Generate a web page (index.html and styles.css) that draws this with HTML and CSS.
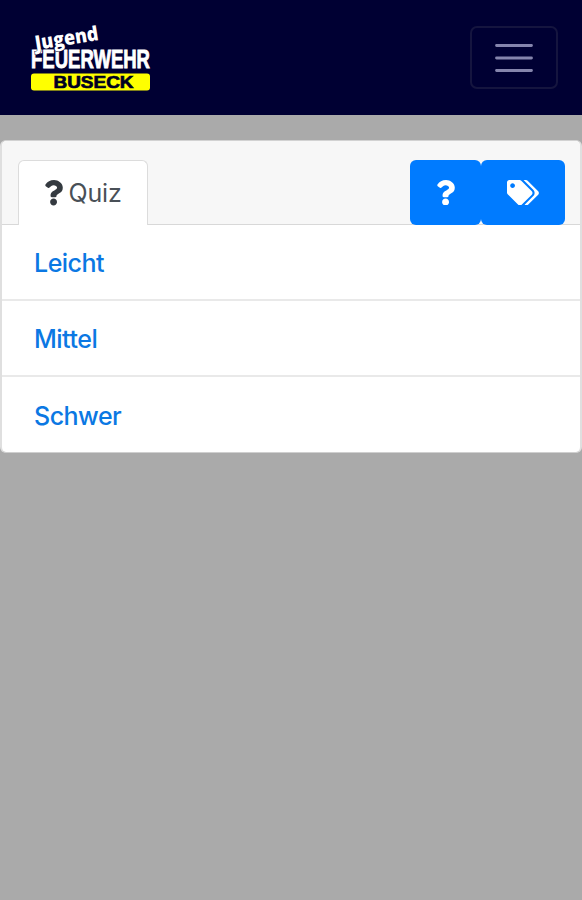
FILE: index.html
```
<!DOCTYPE html>
<html lang="de">
<head>
    <meta charset="UTF-8">
    <meta name="viewport" content="width=device-width, initial-scale=1.0">
    <title>Jugendfeuerwehr Buseck - Quiz</title>
    <link rel="stylesheet" href="styles.css">
</head>
<body>
    <nav class="navbar">
        <a class="navbar-brand" href="#">
            <svg class="logo" viewBox="0 0 124 70" role="img" aria-label="Jugend Feuerwehr Buseck">
                <text class="logo-feuerwehr" x="2" y="44.5" textLength="119" lengthAdjust="spacingAndGlyphs">FEUERWEHR</text>
                <text class="logo-jugend" x="7" y="27" textLength="64" lengthAdjust="spacingAndGlyphs" transform="rotate(-9 7 27)">Jugend</text>
                <rect x="2" y="50.5" width="119" height="17" rx="3"/>
                <text class="logo-buseck" x="24.5" y="65" textLength="80" lengthAdjust="spacingAndGlyphs">BUSECK</text>
            </svg>
        </a>
        <button class="navbar-toggler" type="button" aria-label="Menü">
            <svg viewBox="0 0 38 30">
                <path d="M1.5 2.5h35M1.5 15h35M1.5 27.5h35"/>
            </svg>
        </button>
    </nav>

    <div class="card">
        <div class="card-header">
            <a class="nav-link active" href="#">
                <svg class="icon" viewBox="0 0 384 512"><use href="#question"/></svg>
                <span>Quiz</span>
            </a>
            <div class="buttons">
                <button class="btn btn-question" type="button" aria-label="Fragen">
                    <svg class="icon" viewBox="0 0 384 512">
                        <path id="question" d="M202.021 0C122.202 0 70.503 32.703 29.914 91.026c-7.363 10.58-5.093 25.086 5.178 32.874l43.138 32.709c10.373 7.865 25.132 6.026 33.253-4.148 25.049-31.381 43.63-49.449 82.757-49.449 30.764 0 68.816 19.799 68.816 49.631 0 22.552-18.617 34.134-48.993 51.164-35.423 19.86-82.299 44.576-82.299 106.405V320c0 13.255 10.745 24 24 24h72.471c13.255 0 24-10.745 24-24v-5.773c0-42.86 125.268-44.645 125.268-160.627C377.504 66.256 286.902 0 202.021 0zM192 373.459c-38.196 0-69.271 31.075-69.271 69.271 0 38.195 31.075 69.27 69.271 69.27s69.271-31.075 69.271-69.271-31.075-69.27-69.271-69.27z"/>
                    </svg>
                </button>
                <button class="btn btn-tags" type="button" aria-label="Kategorien">
                    <svg class="icon" viewBox="0 0 640 512">
                        <path d="M497.941 225.941L286.059 14.059A48 48 0 0 0 252.118 0H48C21.49 0 0 21.49 0 48v204.118a48 48 0 0 0 14.059 33.941l211.882 211.882c18.744 18.745 49.136 18.746 67.882 0l204.118-204.118c18.745-18.745 18.745-49.137 0-67.882zM112 160c-26.51 0-48-21.49-48-48s21.49-48 48-48 48 21.49 48 48-21.49 48-48 48zm513.941 133.823L421.823 497.941c-18.745 18.745-49.137 18.745-67.882 0l-.36-.36L527.64 323.522c16.999-16.999 26.36-39.6 26.36-63.64s-9.362-46.641-26.36-63.64L331.397 0h48.721a48 48 0 0 1 33.941 14.059l211.882 211.882c18.745 18.745 18.745 49.137 0 67.882z"/>
                    </svg>
                </button>
            </div>
        </div>
        <ul class="list-group">
            <li><a href="#">Leicht</a></li>
            <li><a href="#">Mittel</a></li>
            <li><a href="#">Schwer</a></li>
        </ul>
    </div>
</body>
</html>
```
FILE: styles.css
```
* {
    box-sizing: border-box;
}

body {
    margin: 0;
    min-height: 100vh;
    background-color: #aaaaaa;
    font-family: Inter, "Liberation Sans", sans-serif;
    font-size: 25px;
}

a {
    text-decoration: none;
}

button {
    font: inherit;
    cursor: pointer;
}

.navbar {
    display: flex;
    align-items: center;
    justify-content: space-between;
    height: 115px;
    padding: 0 24px 0 29px;
    background-color: #000033;
}

.logo {
    display: block;
    width: 124px;
    height: 70px;
    overflow: visible;
    fill: white;
    font-family: "Liberation Sans", Arial, sans-serif;
    font-weight: bold;
}

.logo-jugend {
    font-family: "Open Sans", sans-serif;
    font-size: 20px;
    font-weight: 800;
    stroke: #000033;
    stroke-width: 1px;
    paint-order: stroke;
}

.logo-feuerwehr {
    font-size: 26px;
    stroke: white;
    stroke-width: 0.9px;
}

.logo rect {
    fill: #ffff00;
}

.logo-buseck {
    fill: #000022;
    stroke: #000022;
    stroke-width: 0.7px;
    font-size: 17px;
}

.navbar-toggler {
    display: flex;
    align-items: center;
    justify-content: center;
    width: 88px;
    height: 63px;
    padding: 0;
    background: none;
    border: 2px solid #15153f;
    border-radius: 7px;
}

.navbar-toggler svg {
    width: 38px;
    height: 30px;
    fill: none;
    stroke: #8585ad;
    stroke-width: 2.8px;
    stroke-linecap: round;
}

.card {
    margin-top: 25px;
    background-color: white;
    border: 2px solid #dfdfdf;
    border-top: 1px solid #d2d2d2;
    border-bottom: 1px solid #cfcfcf;
    border-radius: 6px;
}

.card-header {
    display: flex;
    justify-content: space-between;
    height: 84px;
    padding: 19px 15px 0 16px;
    background-color: #f7f7f7;
    border-bottom: 1px solid #d8d8d8;
    border-radius: 5px 5px 0 0;
}

.nav-link {
    display: flex;
    align-items: center;
    justify-content: center;
    gap: 5px;
    width: 130px;
    height: 65px;
    background-color: white;
    border: 1px solid #dcdcdc;
    border-bottom: none;
    border-radius: 6px 6px 0 0;
    color: #495057;
    letter-spacing: -0.1px;
}

.icon {
    height: 25.5px;
    fill: currentColor;
}

.nav-link .icon {
    color: #343a40;
}

.buttons {
    display: flex;
}

.btn {
    display: flex;
    align-items: center;
    justify-content: center;
    height: 65px;
    padding: 0;
    background-color: #007bff;
    border: none;
    border-radius: 6px;
    color: white;
}

.btn-question {
    width: 71px;
}

.btn-tags {
    width: 84px;
}

.list-group {
    margin: 0;
    padding: 0;
    list-style: none;
}

.list-group li {
    display: flex;
    align-items: center;
    height: 76px;
    padding-left: 32px;
    border-bottom: 2px solid #e9e9e9;
}

.list-group li:last-child {
    height: 75px;
    border-bottom: none;
}

.list-group a {
    padding-top: 2px;
    color: #0b78e3;
    font-weight: 500;
    letter-spacing: -0.5px;
}
```
